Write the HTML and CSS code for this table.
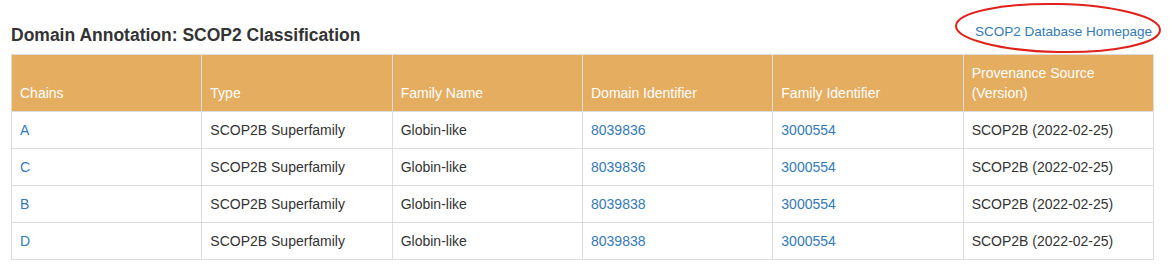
FILE: index.html
```html
<!DOCTYPE html>
<html lang="en">
<head>
<meta charset="utf-8"/>
<title>Domain Annotation: SCOP2 Classification</title>
<link rel="stylesheet" href="styles.css">
</head>
<body>
<div class="panel">
  <div class="panel-head">
    <h3>Domain Annotation: SCOP2 Classification</h3>
    <span class="marked">
      <a href="#">SCOP2 Database Homepage</a>
      <svg class="circle" width="210" height="54" viewBox="0 0 210 54">
        <ellipse cx="105" cy="27" rx="102" ry="24" fill="none" stroke="#e0201b" stroke-width="2" transform="rotate(1.2 105 27)"/>
      </svg>
    </span>
  </div>
  <table class="annot">
    <thead>
      <tr>
        <th>Chains</th>
        <th>Type</th>
        <th>Family Name</th>
        <th>Domain Identifier</th>
        <th>Family Identifier</th>
        <th>Provenance Source<br/>(Version)</th>
      </tr>
    </thead>
    <tbody>
      <tr>
        <td><a href="#">A</a></td>
        <td>SCOP2B Superfamily</td>
        <td>Globin-like</td>
        <td><a href="#">8039836</a></td>
        <td><a href="#">3000554</a></td>
        <td>SCOP2B (2022-02-25)</td>
      </tr>
      <tr>
        <td><a href="#">C</a></td>
        <td>SCOP2B Superfamily</td>
        <td>Globin-like</td>
        <td><a href="#">8039836</a></td>
        <td><a href="#">3000554</a></td>
        <td>SCOP2B (2022-02-25)</td>
      </tr>
      <tr>
        <td><a href="#">B</a></td>
        <td>SCOP2B Superfamily</td>
        <td>Globin-like</td>
        <td><a href="#">8039838</a></td>
        <td><a href="#">3000554</a></td>
        <td>SCOP2B (2022-02-25)</td>
      </tr>
      <tr>
        <td><a href="#">D</a></td>
        <td>SCOP2B Superfamily</td>
        <td>Globin-like</td>
        <td><a href="#">8039838</a></td>
        <td><a href="#">3000554</a></td>
        <td>SCOP2B (2022-02-25)</td>
      </tr>
    </tbody>
  </table>
</div>
</body>
</html>
```

FILE: styles.css
```css
body {
  font-family: 'Liberation Sans', Arial, sans-serif;
  font-size: 14px;
  line-height: 20px;
  color: #333;
  background-color: #fff;
  margin: 0;
  padding: 0;
}
a {
  color: #337ab7;
  text-decoration: none;
}
.panel {
  padding: 0 16px 0 11px;
}
.panel-head {
  display: flex;
  justify-content: space-between;
  align-items: flex-end;
  height: 54px;
  padding-bottom: 8px;
  box-sizing: border-box;
}
.panel-head h3 {
  margin: 0;
  font-size: 17.5px;
  font-weight: bold;
  line-height: 22px;
  color: #333;
}
.marked {
  position: relative;
  font-size: 13.5px;
  margin-bottom: 4px;
  margin-right: 2px;
}
.marked .circle {
  position: absolute;
  left: -22px;
  top: -21px;
}
.annot {
  width: 100%;
  border-collapse: collapse;
  border: 1px solid #ddd;
  table-layout: fixed;
}
.annot th,
.annot td {
  padding: 8px;
  border: 1px solid #ddd;
  text-align: left;
}
.annot th {
  background-color: #e5ad5f;
  color: #fff;
  font-weight: normal;
  vertical-align: bottom;
}
.annot td {
  vertical-align: top;
}
```
